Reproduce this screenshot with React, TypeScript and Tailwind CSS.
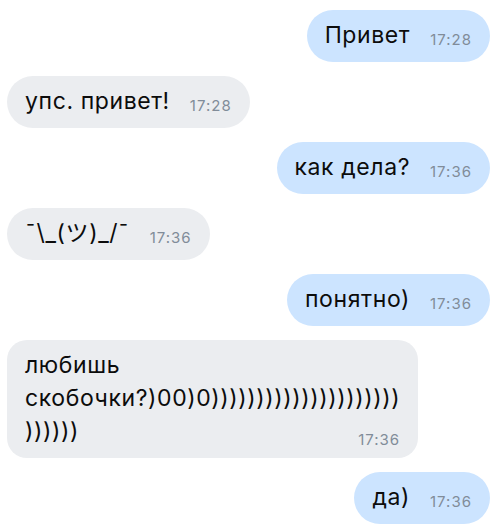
import React from 'react';

type Msg = {
  out: boolean;
  text: React.ReactNode;
  time: string;
  multi?: boolean;
};

const messages: Msg[] = [
  { out: true, text: 'Привет', time: '17:28' },
  { out: false, text: 'упс. привет!', time: '17:28' },
  { out: true, text: 'как дела?', time: '17:36' },
  { out: false, text: '¯\\_(ツ)_/¯', time: '17:36' },
  { out: true, text: 'понятно)', time: '17:36' },
  {
    out: false,
    multi: true,
    text: (
      <>
        любишь
        <br />
        скобочки?)00)0{')'.repeat(21)}
        <br />
        {')'.repeat(6)}
      </>
    ),
    time: '17:36',
  },
  { out: true, text: 'да)', time: '17:36' },
];

const Bubble: React.FC<{ msg: Msg }> = ({ msg }) => {
  const color = msg.out ? 'bg-[#cce4ff]' : 'bg-[#ebedf0]';
  if (msg.multi) {
    return (
      <div className={`${color} h-[118px] rounded-[20px] px-[18px] py-[9px] text-[23px] tracking-[0.6px] leading-[33px] text-[#0c0c0c]`}>
        <span>{msg.text}</span>
        <span className="float-right ml-5 mt-[8px] text-[15px] leading-[33px] tracking-[1px] text-[#818c99]">{msg.time}</span>
      </div>
    );
  }
  return (
    <div className={`${color} h-[52px] flex items-center rounded-full px-[18px] text-[#0c0c0c]`}>
      <div className="flex items-baseline">
        <span className="text-[23px] tracking-[0.6px] leading-[26px] whitespace-nowrap">{msg.text}</span>
        <span className="ml-5 text-[15px] tracking-[1px] leading-[26px] text-[#818c99] translate-y-[2px]">{msg.time}</span>
      </div>
    </div>
  );
};

export default function App() {
  return (
    <div
      className="w-[495px] h-[529px] overflow-hidden bg-white pt-[10px] pl-[7px] pr-[5px] flex flex-col gap-[14px]"
      style={{ fontFamily: 'Inter, "Noto Sans CJK JP", sans-serif' }}
    >
      {messages.map((m, i) => (
        <div key={i} className={`flex ${m.out ? 'justify-end' : 'justify-start'}`}>
          <Bubble msg={m} />
        </div>
      ))}
    </div>
  );
}
